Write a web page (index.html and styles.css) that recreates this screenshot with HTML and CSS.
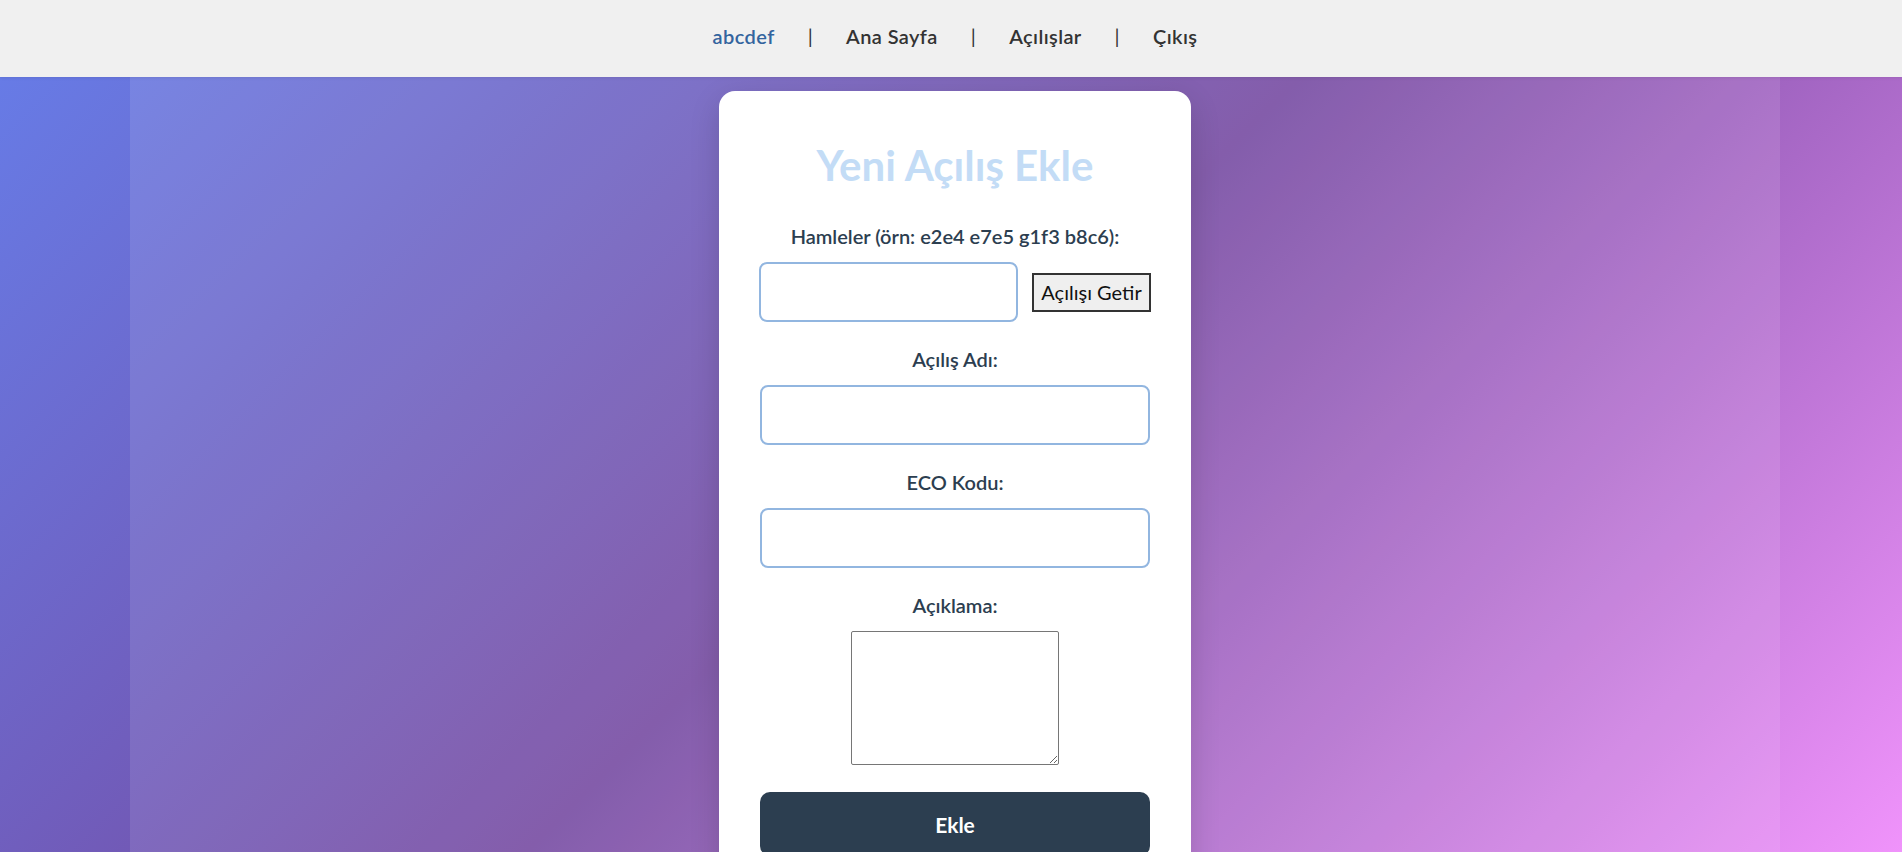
FILE: index.html
```html
<!DOCTYPE html>
<html lang="tr">
<head>
<meta charset="utf-8">
<title>Yeni Açılış Ekle</title>
<link rel="stylesheet" href="styles.css">
</head>
<body>
<nav class="topbar">
  <a class="nav-user" href="#">abcdef</a>
  <span class="nav-sep">|</span>
  <a class="nav-link" href="#">Ana Sayfa</a>
  <span class="nav-sep">|</span>
  <a class="nav-link" href="#">Açılışlar</a>
  <span class="nav-sep">|</span>
  <a class="nav-link" href="#">Çıkış</a>
</nav>
<main class="page">
  <div class="container">
    <div class="card">
      <h2 class="card-title">Yeni Açılış Ekle</h2>
      <form class="form">
        <div class="form-group">
          <label class="form-label" for="moves">Hamleler (örn: e2e4 e7e5 g1f3 b8c6):</label>
          <div class="move-row">
            <input class="form-input move-input" id="moves" type="text">
            <button class="fetch-btn" type="button">Açılışı Getir</button>
          </div>
        </div>
        <div class="form-group">
          <label class="form-label" for="name">Açılış Adı:</label>
          <input class="form-input" id="name" type="text">
        </div>
        <div class="form-group">
          <label class="form-label" for="eco">ECO Kodu:</label>
          <input class="form-input" id="eco" type="text">
        </div>
        <div class="form-group last">
          <label class="form-label" for="desc">Açıklama:</label>
          <textarea class="form-textarea" id="desc"></textarea>
        </div>
        <button class="submit-btn" type="submit">Ekle</button>
      </form>
    </div>
  </div>
</main>
</body>
</html>
```
FILE: styles.css
```css
* { box-sizing: border-box; }

html, body {
  margin: 0;
  padding: 0;
}

body {
  font-family: Lato, "Open Sans", sans-serif;
  color: #2c3e50;
  background: linear-gradient(135deg, #667eea 0%, #764ba2 50%, #f093fb 100%) fixed;
  min-height: 100vh;
}

.topbar {
  height: 77px;
  background: #f0f0f0;
  display: flex;
  align-items: center;
  justify-content: center;
  gap: 33px;
  padding-left: 8px;
  padding-bottom: 6px;
  font-size: 20px;
  letter-spacing: 0.4px;
  font-weight: 600;
  box-shadow: 0 1px 3px rgba(0,0,0,0.08);
  position: relative;
  z-index: 1;
}

.nav-user {
  color: #33649e;
  text-decoration: none;
}

.nav-link {
  color: #333333;
  text-decoration: none;
}

.nav-sep {
  color: #333333;
  font-weight: 400;
}

.page {
  padding-left: 8px;
}

.container {
  max-width: 1650px;
  margin: 0 auto;
  background: rgba(255, 255, 255, 0.1);
  padding: 14px 0 40px;
  min-height: calc(100vh - 77px);
}

.card {
  width: 472px;
  margin: 0 auto;
  background: #ffffff;
  border-radius: 16px;
  padding: 49px 41px 40px;
  box-shadow: 0 10px 30px rgba(0, 0, 0, 0.15);
}

.card-title {
  margin: 0 0 34px;
  font-size: 42px;
  line-height: 1.2;
  font-weight: 700;
  color: #c3dcf6;
  text-align: center;
}

.form-group {
  margin-bottom: 25px;
  text-align: center;
}

.form-group.last {
  margin-bottom: 27px;
}

.form-label {
  display: block;
  font-size: 20px;
  line-height: 24px;
  font-weight: 600;
  color: #2c3e50;
  margin-bottom: 14px;
}

.form-input {
  display: block;
  width: 100%;
  height: 60px;
  border: 2px solid #92b6e0;
  border-radius: 8px;
  padding: 0 12px;
  font-family: inherit;
  font-size: 16px;
  background: #ffffff;
  outline: none;
}

.move-row {
  display: flex;
  align-items: center;
  justify-content: center;
  gap: 14px;
}

.move-input {
  width: 259px;
  flex: none;
}

.fetch-btn {
  height: 39px;
  padding: 0 7px;
  font-family: inherit;
  font-size: 20px;
  color: #111111;
  background: #efefef;
  border: 2px solid #333333;
  border-radius: 0;
  white-space: nowrap;
}

.form-textarea {
  display: block;
  margin: 0 auto;
  width: 208px;
  height: 134px;
  border: 1px solid #767676;
  border-radius: 2px;
  font-family: inherit;
  font-size: 14px;
}

.submit-btn {
  display: block;
  width: 100%;
  height: 64px;
  border: none;
  border-radius: 10px;
  background: #2c3e50;
  color: #ffffff;
  font-family: inherit;
  font-size: 21px;
  font-weight: 700;
}
```
